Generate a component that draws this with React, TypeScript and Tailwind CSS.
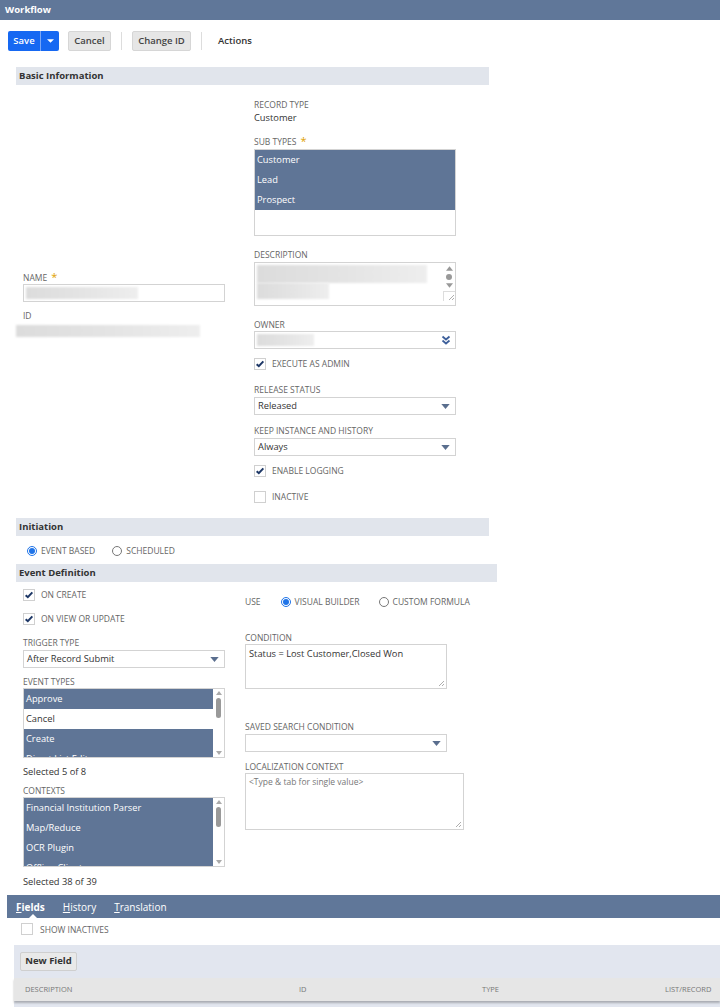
import React from "react";

const Label = ({ children, req }: { children: React.ReactNode; req?: boolean }) => (
  <div className="text-[8.5px] leading-[12px] text-[#666] uppercase">
    {children}
    {req && <span className="text-[#e0a100] ml-[4px] text-[11px] leading-[10px]">*</span>}
  </div>
);

const Check = ({ checked }: { checked?: boolean }) => (
  <span className="w-[12px] h-[12px] border border-[#d0d0d0] bg-white inline-flex items-center justify-center shrink-0">
    {checked && (
      <svg viewBox="0 0 12 12" className="w-[10px] h-[10px]">
        <path d="M2 6.2 L4.6 8.6 L10 2.8" stroke="#1d3766" strokeWidth="2.4" fill="none" />
      </svg>
    )}
  </span>
);

const CheckRow = ({ checked, label }: { checked?: boolean; label: string }) => (
  <div className="flex items-center h-[14px]">
    <Check checked={checked} />
    <span className="ml-[6px] text-[8.5px] text-[#666] uppercase">{label}</span>
  </div>
);

const Radio = ({ on, label }: { on?: boolean; label: string }) => (
  <span className="flex items-center">
    <span
      className={`w-[10px] h-[10px] rounded-full border flex items-center justify-center bg-white ${
        on ? "border-[#1f74e8]" : "border-[#777]"
      }`}
    >
      {on && <span className="w-[6px] h-[6px] rounded-full bg-[#1f74e8]" />}
    </span>
    <span className="ml-[4px] text-[8.5px] text-[#666] uppercase">{label}</span>
  </span>
);

const Arrow = () => (
  <svg viewBox="0 0 10 6" className="w-[9px] h-[5px]">
    <path d="M0 0 H10 L5 6 Z" fill="#5a6e8e" />
  </svg>
);

const Select = ({ value, w }: { value?: string; w: string }) => (
  <div className={`${w} h-[18px] border border-[#d3d3d3] bg-white flex items-center justify-between pl-[3px] pr-[5px]`}>
    <span className="text-[9.3px] text-[#333]">{value}</span>
    <Arrow />
  </div>
);

const Grip = () => (
  <svg viewBox="0 0 8 8" className="w-[8px] h-[8px]">
    <path d="M7 2 L2 7 M7 5 L5 7" stroke="#999" strokeWidth="0.8" />
  </svg>
);

const Blur = ({ w, h }: { w: string; h: string }) => (
  <div className={`${w} ${h} bg-gradient-to-r from-[#dcdcdc] via-[#e4e4e4] to-[#eeeeee] blur-[1px]`} />
);

const ListBox = ({ rows, sel }: { rows: string[]; sel: boolean[] }) => (
  <div className="w-[202px] h-[70px] border border-[#d3d3d3] bg-white flex overflow-hidden">
    <div className="flex-1 overflow-hidden">
      {rows.map((r, i) => (
        <div
          key={r}
          className={`h-[20px] leading-[20px] pl-[2px] text-[9.3px] whitespace-nowrap ${
            sel[i] ? "bg-[#5f7596] text-white" : "bg-white text-[#333]"
          }`}
        >
          {r}
        </div>
      ))}
    </div>
    <div className="w-[11px] flex flex-col items-center justify-between py-[2px]">
      <svg viewBox="0 0 6 4" className="w-[6px] h-[4px]">
        <path d="M0 4 L3 0 L6 4 Z" fill="#aaa" />
      </svg>
      <div className="w-[5px] h-[20px] rounded-[3px] bg-[#999] -mt-[30px]" />
      <svg viewBox="0 0 6 4" className="w-[6px] h-[4px]">
        <path d="M0 0 L6 0 L3 4 Z" fill="#aaa" />
      </svg>
    </div>
  </div>
);

const SectionHead = ({ title, w }: { title: string; w: string }) => (
  <div className={`ml-[16px] ${w} h-[18px] bg-[#e1e5ec] flex items-center pl-[3px] text-[9.5px] font-bold text-[#333]`}>
    {title}
  </div>
);

export default function App() {
  return (
    <div className="w-[720px] h-[1007px] bg-white overflow-hidden font-['Open_Sans',sans-serif] text-[#333]">
      {/* header */}
      <div className="h-[20px] bg-[#607799] flex items-center pl-[5px] text-[9.5px] font-bold text-white">Workflow</div>

      {/* toolbar */}
      <div className="flex items-center h-[20px] mt-[11px] pl-[8px]">
        <div className="flex h-[20px] rounded-[2px] bg-[#1668f2] text-white overflow-hidden">
          <span className="w-[32px] flex items-center justify-center text-[9.5px] font-semibold">Save</span>
          <span className="w-[1px] bg-[#7aa6f5]" />
          <span className="w-[18px] flex items-center justify-center">
            <svg viewBox="0 0 8 4" className="w-[7px] h-[4px]">
              <path d="M0 0 H8 L4 4 Z" fill="white" />
            </svg>
          </span>
        </div>
        <span className="ml-[9px] h-[20px] w-[43px] rounded-[2px] bg-[#e6e6e6] border border-[#d6d6d6] flex items-center justify-center text-[9.5px] font-semibold text-[#444]">
          Cancel
        </span>
        <span className="ml-[10px] w-[1px] h-[18px] bg-[#ddd]" />
        <span className="ml-[10px] h-[20px] w-[59px] rounded-[2px] bg-[#e6e6e6] border border-[#d6d6d6] flex items-center justify-center text-[9.5px] font-semibold text-[#444]">
          Change ID
        </span>
        <span className="ml-[10px] w-[1px] h-[18px] bg-[#ddd]" />
        <span className="ml-[16px] text-[9.5px] font-semibold text-[#333]">Actions</span>
      </div>

      {/* basic information */}
      <div className="mt-[16px]">
        <SectionHead title="Basic Information" w="w-[473px]" />
      </div>
      <div className="flex items-center">
        <div className="w-[254px] pl-[16px] pt-[20px]">
          <div className="pl-[7px]">
            <Label req>Name</Label>
            <div className="w-[202px] h-[18px] border border-[#d3d3d3] bg-white flex items-center px-[2px]">
              <Blur w="w-[112px]" h="h-[12px]" />
            </div>
            <div className="mt-[8px]">
              <Label>ID</Label>
            </div>
          </div>
          <div className="mt-[3px]">
            <Blur w="w-[184px]" h="h-[12px]" />
          </div>
        </div>
        <div className="pt-[14px]">
          <Label>Record Type</Label>
          <div className="text-[9.3px] leading-[13px] text-[#333]">Customer</div>
          <div className="mt-[12px]">
            <Label req>Sub Types</Label>
          </div>
          <div className="mt-[1px] w-[202px] h-[87px] border border-[#d3d3d3] bg-white">
            {["Customer", "Lead", "Prospect"].map((r) => (
              <div key={r} className="h-[20px] leading-[20px] pl-[2px] text-[9.3px] bg-[#5f7596] text-white">
                {r}
              </div>
            ))}
          </div>
          <div className="mt-[13px]">
            <Label>Description</Label>
          </div>
          <div className="mt-[1px] w-[202px] h-[44px] border border-[#d3d3d3] bg-white flex">
            <div className="flex-1 px-[2px] py-[2px] flex flex-col">
              <Blur w="w-[170px]" h="h-[18px]" />
              <Blur w="w-[72px]" h="h-[16px]" />
            </div>
            <div className="w-[12px] flex flex-col items-center pt-[3px]">
              <svg viewBox="0 0 6 4" className="w-[7px] h-[5px]">
                <path d="M0 4 L3 0 L6 4 Z" fill="#999" />
              </svg>
              <div className="mt-[3px] w-[6px] h-[6px] rounded-full bg-[#999]" />
              <svg viewBox="0 0 6 4" className="mt-[3px] w-[7px] h-[5px]">
                <path d="M0 0 L6 0 L3 4 Z" fill="#999" />
              </svg>
              <div className="mt-[3px] w-[12px] h-[10px] border-l border-t border-[#ddd] flex items-end justify-end">
                <Grip />
              </div>
            </div>
          </div>
          <div className="mt-[13px]">
            <Label>Owner</Label>
          </div>
          <div className="w-[202px] h-[18px] border border-[#d3d3d3] bg-white flex items-center justify-between pl-[2px] pr-[4px]">
            <Blur w="w-[57px]" h="h-[12px]" />
            <svg viewBox="0 0 10 10" className="w-[10px] h-[10px]">
              <path d="M1.5 1.5 L5 4.5 L8.5 1.5 M1.5 5.5 L5 8.5 L8.5 5.5" stroke="#3d5f9a" strokeWidth="1.8" fill="none" />
            </svg>
          </div>
          <div className="mt-[8px]">
            <CheckRow checked label="Execute as Admin" />
          </div>
          <div className="mt-[13px]">
            <Label>Release Status</Label>
          </div>
          <div className="mt-[1px]">
            <Select w="w-[202px]" value="Released" />
          </div>
          <div className="mt-[10px]">
            <Label>Keep Instance and History</Label>
          </div>
          <div className="mt-[1px]">
            <Select w="w-[202px]" value="Always" />
          </div>
          <div className="mt-[8px]">
            <CheckRow checked label="Enable Logging" />
          </div>
          <div className="mt-[12px]">
            <CheckRow label="Inactive" />
          </div>
        </div>
      </div>

      {/* initiation */}
      <div className="mt-[14px]">
        <SectionHead title="Initiation" w="w-[473px]" />
      </div>
      <div className="flex items-center h-[14px] mt-[8px] pl-[27px] gap-[17px]">
        <Radio on label="Event Based" />
        <Radio label="Scheduled" />
      </div>

      {/* event definition */}
      <div className="mt-[6px]">
        <SectionHead title="Event Definition" w="w-[481px]" />
      </div>
      <div className="flex">
        <div className="w-[245px] pl-[23px]">
          <div className="mt-[6px]">
            <CheckRow checked label="On Create" />
          </div>
          <div className="mt-[10px]">
            <CheckRow checked label="On View or Update" />
          </div>
          <div className="mt-[11px]">
            <Label>Trigger Type</Label>
          </div>
          <div className="mt-[1px]">
            <Select w="w-[202px]" value="After Record Submit" />
          </div>
          <div className="mt-[8px]">
            <Label>Event Types</Label>
          </div>
          <ListBox rows={["Approve", "Cancel", "Create", "Direct List Edit"]} sel={[true, false, true, true]} />
          <div className="mt-[7px] text-[9.3px] leading-[13px] text-[#333]">Selected 5 of 8</div>
          <div className="mt-[7px]">
            <Label>Contexts</Label>
          </div>
          <ListBox
            rows={["Financial Institution Parser", "Map/Reduce", "OCR Plugin", "Offline Client"]}
            sel={[true, true, true, true]}
          />
          <div className="mt-[8px] text-[9.3px] leading-[13px] text-[#333]">Selected 38 of 39</div>
        </div>
        <div>
          <div className="mt-[13px] flex items-center h-[14px]">
            <span className="text-[8.5px] text-[#666] uppercase">Use</span>
            <span className="ml-[20px] flex">
              <Radio on label="Visual Builder" />
            </span>
            <span className="ml-[19px] flex">
              <Radio label="Custom Formula" />
            </span>
          </div>
          <div className="mt-[23px]">
            <Label>Condition</Label>
          </div>
          <div className="w-[202px] h-[45px] border border-[#d3d3d3] bg-white relative px-[3px] py-[2px] text-[9.3px] text-[#333]">
            Status = Lost Customer,Closed Won
            <span className="absolute right-[1px] bottom-[1px]">
              <Grip />
            </span>
          </div>
          <div className="mt-[32px]">
            <Label>Saved Search Condition</Label>
          </div>
          <div className="mt-[1px]">
            <Select w="w-[202px]" />
          </div>
          <div className="mt-[9px]">
            <Label>Localization Context</Label>
          </div>
          <div className="w-[219px] h-[57px] border border-[#d3d3d3] bg-white relative px-[3px] py-[2px] text-[8.5px] text-[#777]">
            {"<Type & tab for single value>"}
            <span className="absolute right-[1px] bottom-[1px]">
              <Grip />
            </span>
          </div>
        </div>
      </div>

      {/* tabs */}
      <div className="mt-[7px] ml-[7px] h-[23px] bg-[#607799] flex items-center pl-[9px] pt-[2px] gap-[18px] text-[10px] text-white relative">
        <span className="font-bold">
          <span className="underline">F</span>ields
        </span>
        <span>
          <span className="underline">H</span>istory
        </span>
        <span>
          <span className="underline">T</span>ranslation
        </span>
        <span className="absolute left-[22px] bottom-0 w-0 h-0 border-l-[4px] border-r-[4px] border-b-[4px] border-l-transparent border-r-transparent border-b-white" />
      </div>
      <div className="mt-[5px] pl-[21px]">
        <div className="flex items-center h-[12px]">
          <Check />
          <span className="ml-[7px] text-[8.5px] text-[#666] uppercase mt-[3px]">Show Inactives</span>
        </div>
      </div>
      <div className="mt-[10px] ml-[14px] h-[63px] bg-[#e2e6ef] pt-[7px]">
        <div className="ml-[6px] w-[57px] h-[19px] rounded-[2px] bg-[#e9e9e9] border border-[#cfcfcf] flex items-center justify-center text-[9.5px] font-bold text-[#333]">
          New Field
        </div>
        <div className="mt-[7px] h-[23px] bg-[#e6e6e6] shadow-[0_2px_2px_rgba(0,0,0,0.25)] grid grid-cols-[274px_183px_183px_1fr] items-center pl-[11px] text-[7.5px] text-[#777] uppercase">
          <span>Description</span>
          <span>ID</span>
          <span>Type</span>
          <span>List/Record</span>
        </div>
      </div>
    </div>
  );
}
